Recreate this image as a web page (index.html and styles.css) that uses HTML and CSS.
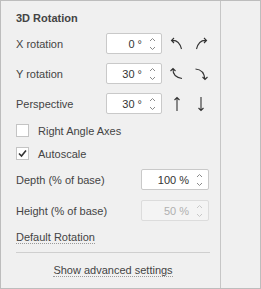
FILE: index.html
```html
<!DOCTYPE html>
<html lang="en">
<head>
    <meta charset="UTF-8">
    <title>3D Rotation</title>
    <link rel="stylesheet" href="styles.css">
</head>
<body>
<div id="wrap">
    <div class="main">
        <div class="title">3D Rotation</div>

        <div class="row">
            <span class="label">X rotation</span>
            <div class="spin small"><span class="val">0 °</span>
                <svg class="arrows" width="7" height="21" viewBox="0 0 7 21"><path d="M1 8 L3.5 5.5 L6 8 M1 14 L3.5 16.5 L6 14"/></svg>
            </div>
            <svg class="icon" width="16" height="16" viewBox="0 0 16 16"><path d="M2.5 4.5 Q10 3.5 12.5 13 M5 2 L2.5 4.5 L5 7"/></svg>
            <svg class="icon" width="16" height="16" viewBox="0 0 16 16"><path d="M13.5 4.5 Q6 3.5 3.5 13 M11 2 L13.5 4.5 L11 7"/></svg>
        </div>

        <div class="row">
            <span class="label">Y rotation</span>
            <div class="spin small"><span class="val">30 °</span>
                <svg class="arrows" width="7" height="21" viewBox="0 0 7 21"><path d="M1 8 L3.5 5.5 L6 8 M1 14 L3.5 16.5 L6 14"/></svg>
            </div>
            <svg class="icon" width="16" height="16" viewBox="0 0 16 16"><path d="M4 2.5 Q3.5 11 13 12.5 M1.5 5 L4 2.5 L6.5 5"/></svg>
            <svg class="icon" width="16" height="16" viewBox="0 0 16 16"><path d="M2.5 3 Q11 3.5 12 13.5 M9.5 11 L12 13.5 L14.5 11"/></svg>
        </div>

        <div class="row">
            <span class="label">Perspective</span>
            <div class="spin small"><span class="val">30 °</span>
                <svg class="arrows" width="7" height="21" viewBox="0 0 7 21"><path d="M1 8 L3.5 5.5 L6 8 M1 14 L3.5 16.5 L6 14"/></svg>
            </div>
            <svg class="icon" width="16" height="16" viewBox="0 0 16 16"><path d="M8 1.5 L8 15 M5.5 4 L8 1.5 L10.5 4"/></svg>
            <svg class="icon" width="16" height="16" viewBox="0 0 16 16"><path d="M8 1 L8 14.5 M5.5 12 L8 14.5 L10.5 12"/></svg>
        </div>

        <label class="check"><span class="box"></span>Right Angle Axes</label>
        <label class="check on"><span class="box"><svg width="11" height="11" viewBox="0 0 11 11"><path d="M2 5.5 L4.5 8 L9 2.5"/></svg></span>Autoscale</label>

        <div class="row wide first">
            <span class="label">Depth (% of base)</span>
            <div class="spin big"><span class="val">100 %</span>
                <svg class="arrows" width="7" height="21" viewBox="0 0 7 21"><path d="M1 8 L3.5 5.5 L6 8 M1 14 L3.5 16.5 L6 14"/></svg>
            </div>
        </div>
        <div class="row wide">
            <span class="label dim">Height (% of base)</span>
            <div class="spin big off"><span class="val">50 %</span>
                <svg class="arrows" width="7" height="21" viewBox="0 0 7 21"><path d="M1 8 L3.5 5.5 L6 8 M1 14 L3.5 16.5 L6 14"/></svg>
            </div>
        </div>

        <div class="link"><a>Default Rotation</a></div>
        <div class="foot"><a>Show advanced settings</a></div>
    </div>
    <div class="side"></div>
</div>
</body>
</html>
```

FILE: styles.css
```css
html, body {
    margin: 0;
    padding: 0;
}
body {
    font: 11px/14px "Liberation Sans", Arial, sans-serif;
    color: #444;
    background: #f0f0f0;
}
#wrap {
    display: flex;
    box-sizing: border-box;
    width: 261px;
    height: 289px;
    border: 1px solid #bdbdbd;
    background: #f0f0f0;
}
.main {
    width: 194px;
    padding: 9px 10px 0 15px;
    border-right: 1px solid #c6c6c6;
}
.side {
    flex: 1;
}
.title {
    font-weight: bold;
    line-height: 16px;
}
.row {
    display: flex;
    align-items: center;
    height: 21px;
    margin-top: 9px;
}
.title + .row {
    margin-top: 7px;
}
.label {
    width: 90px;
    flex: none;
    white-space: nowrap;
}
.spin {
    box-sizing: border-box;
    display: flex;
    align-items: center;
    justify-content: flex-end;
    flex: none;
    height: 21px;
    background: #fff;
    border: 1px solid #c9c9c9;
    border-radius: 2px;
    color: #333;
}
.spin.small {
    width: 56px;
    margin-right: 7px;
}
.spin.big {
    width: 68px;
    margin-left: auto;
    margin-right: 1px;
}
.spin .val {
    margin-right: 7px;
}
.spin .arrows {
    margin-right: 5px;
}
.arrows path {
    fill: none;
    stroke: #8a8a8a;
    stroke-width: 1;
}
.spin.off {
    background: #f4f4f4;
    border-color: #dcdcdc;
    color: #b0b0b0;
}
.spin.off .arrows path {
    stroke: #c8c8c8;
}
.icon {
    flex: none;
    margin-right: 8px;
}
.icon:last-child {
    margin-right: 0;
}
.icon path {
    fill: none;
    stroke: #333;
    stroke-width: 1.1;
}
.check {
    display: flex;
    align-items: center;
    height: 13px;
    margin-top: 10px;
}
.check .box {
    box-sizing: border-box;
    display: flex;
    align-items: center;
    justify-content: center;
    width: 13px;
    height: 13px;
    margin-right: 9px;
    background: #fff;
    border: 1px solid #c4c4c4;
}
.check .box path {
    fill: none;
    stroke: #333;
    stroke-width: 1.6;
}
.row.wide {
    margin-top: 10px;
}
.row.wide.first {
    margin-top: 9px;
}
.link {
    margin-top: 9px;
    padding-bottom: 8px;
    border-bottom: 1px solid #cfcfcf;
}
.link a, .foot a {
    border-bottom: 1px dotted #9a9a9a;
    color: #444;
}
.foot {
    margin-top: 10px;
    text-align: center;
}
```
